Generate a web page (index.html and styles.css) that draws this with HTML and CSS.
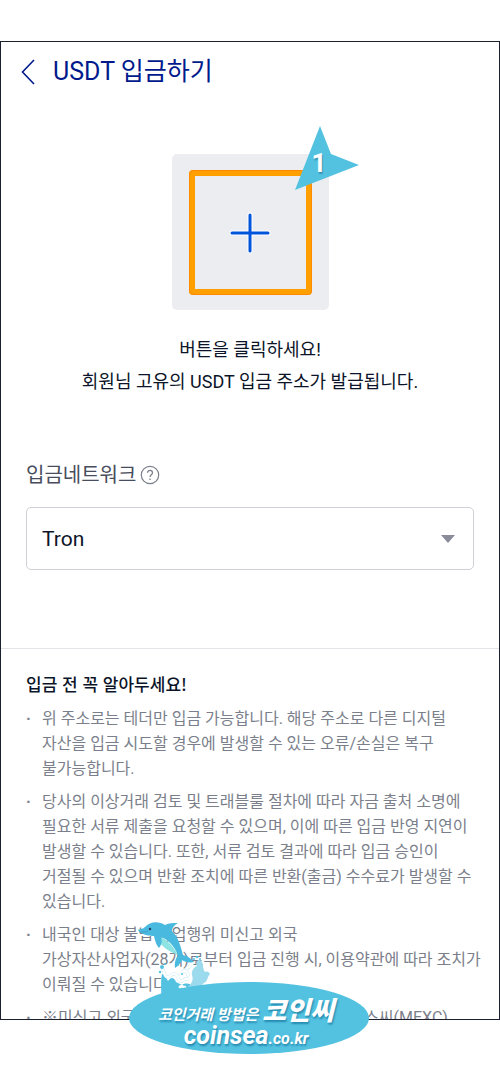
FILE: index.html
```html
<!DOCTYPE html>
<html lang="ko">
<head>
<meta charset="utf-8">
<meta name="viewport" content="width=device-width, initial-scale=1">
<title>USDT 입금하기</title>
<link rel="stylesheet" href="styles.css">
</head>
<body class="page">
<main class="screen">
  <header class="header">
    <button class="back" type="button" aria-label="뒤로">
      <svg width="14" height="26" viewBox="0 0 14 26" fill="none" stroke="currentColor" stroke-width="1.6"><path d="M13 1 1.5 13 13 25"/></svg>
    </button>
    <h1 class="title">USDT 입금하기</h1>
  </header>

  <section class="issue">
    <div class="issue-box">
      <button class="issue-button" type="button" aria-label="입금 주소 발급">
        <svg width="42" height="42" viewBox="0 0 42 42" fill="none" stroke-linecap="round"><path d="M21 3v36M3 21h36" stroke="#fff" stroke-width="5"/><path d="M21 3v36M3 21h36" stroke="#0054dc" stroke-width="3"/></svg>
      </button>
      <div class="pointer">
        <svg class="pointer-shape" viewBox="0 0 64 65"><path d="M25 0 36 28 64 39 0 64Z" fill="#53c2e1"/></svg>
        <span class="pointer-number">1</span>
      </div>
    </div>
    <p class="issue-text">버튼을 클릭하세요!<br>회원님 고유의 USDT 입금 주소가 발급됩니다.</p>
  </section>

  <section class="network">
    <div class="network-label">
      <label for="network">입금네트워크</label>
      <button class="help" type="button" aria-label="도움말">
        <svg width="20" height="20" viewBox="0 0 20 20" fill="none" stroke="currentColor"><circle cx="10" cy="10" r="8.7" stroke-width="1.2"/><path d="M7.5 7.8c0-3.2 5-3.1 5-.1 0 2-2.5 2.2-2.5 4.4M10 13.5v1.5" stroke-width="1.3"/></svg>
      </button>
    </div>
    <div class="select-wrap">
      <select id="network" class="select"><option>Tron</option></select>
      <svg class="arrow" width="14" height="8" viewBox="0 0 14 8"><path d="M0 0h14L7 8Z" fill="#8a8d99"/></svg>
    </div>
  </section>

  <section class="notice">
    <h2 class="notice-title">입금 전 꼭 알아두세요!</h2>
    <ul class="notice-list">
      <li>위 주소로는 테더만 입금 가능합니다. 해당 주소로 다른 디지털<br>자산을 입금 시도할 경우에 발생할 수 있는 오류/손실은 복구<br>불가능합니다.</li>
      <li>당사의 이상거래 검토 및 트래블룰 절차에 따라 자금 출처 소명에<br>필요한 서류 제출을 요청할 수 있으며, 이에 따른 입금 반영 지연이<br>발생할 수 있습니다. 또한, 서류 검토 결과에 따라 입금 승인이<br>거절될 수 있으며 반환 조치에 따른 반환(출금) 수수료가 발생할 수<br>있습니다.</li>
      <li>내국인 대상 불법 영업행위 미신고 외국<br>가상자산사업자(28개)로부터 입금 진행 시, 이용약관에 따라 조치가<br>이뤄질 수 있습니다.</li>
      <li>※미신고 외국 가상자산사업자(28개) : 쿠코인, 멕스씨(MEXC)</li>
    </ul>
  </section>
</main>

<aside class="brand">
  <svg class="dolphin" viewBox="0 0 78 74">
    <path d="M24 74c1-6-1-12 1-22 3 1 4 4 6 7 3-4 6-4 8 1l6 3c4-3 9-1 12 2l2 9Z" fill="#53c2e1"/>
    <path d="M48 67c6-4 9-8 7-14-1-4 2-8 5-9-2-3 1-7 3-6 4 2 2 8 5 12 2-1 4 0 5 2-3 3-2 7-6 9-4 3-3 6-6 8Z" fill="#9cdaed"/>
    <g fill="none" stroke-linecap="round" stroke-linejoin="round">
      <path d="M26 48c2 4 1 6 4 7s4-4 8-3 2 6 5 7 4-3 7-2M46 49c3-1 5 2 5 4M50 46c3 0 3-4 6-5M43 65c2-3 3 2 5 0" stroke="#b5e3f1" stroke-width="3"/>
      <path d="M26 48c2 4 1 6 4 7s4-4 8-3 2 6 5 7 4-3 7-2M46 49c3-1 5 2 5 4M50 46c3 0 3-4 6-5M43 65c2-3 3 2 5 0" stroke="#fff" stroke-width="2.4"/>
    </g>
    <g fill="#53c2e1"><circle cx="25" cy="45" r="2"/><circle cx="23" cy="50" r="1.2"/><circle cx="28" cy="42" r="1"/><circle cx="60" cy="35" r="1.3"/><circle cx="63" cy="37" r="1"/><circle cx="57" cy="37" r="1"/><circle cx="45" cy="52" r="1"/><circle cx="36" cy="58" r="1"/></g>
    <path d="M19 13c8 2 16 9 22 20C33 30 23 24 22 18Z" fill="#8de4e2"/>
    <path d="M0 8c3-1 6-1 8-3 5-6 14-6 20-2 4-2 8-2 13-2-4 2-6 5-6 8 7 7 9 17 11 24 5 1 7 3 11 7-5 1-9 0-12-2-2 4-4 6-7 8-1-5 1-10 3-13-4-9-9-15-17-18 1 5 1 7-2 11-3-3-4-8-5-12-4 0-9-1-11-2-2-1-4-2-5-4Z" fill="#49b9df"/>
    <circle cx="13" cy="7" r="1.2" fill="#203b5c"/>
    <path d="M2 10c4 0 7 0 9-1" fill="none" stroke="#398fb7" stroke-width=".6"/>
  </svg>
  <div class="brand-oval">
    <p class="brand-line"><span class="brand-small">코인거래 방법은</span><strong class="brand-name">코인씨</strong></p>
    <p class="brand-url">coinsea<span class="brand-domain">.co.kr</span></p>
  </div>
</aside>
</body>
</html>
```
FILE: styles.css
```css
* { box-sizing: border-box; }

.page {
  position: relative;
  display: flex;
  flex-direction: column;
  height: 100vh;
  margin: 0;
  padding: 41px 0 63px;
  background: #fff;
  color: #0b1428;
  font-family: Roboto, "Noto Sans CJK KR", sans-serif;
}

.screen {
  flex: 1;
  min-height: 0;
  overflow: hidden;
  border: 1px solid #1b1f2e;
}

button {
  padding: 0;
  border: 0;
  background: none;
  color: inherit;
}

.back, .help { display: flex; }

.header {
  display: flex;
  align-items: center;
  gap: 18px;
  height: 60px;
  padding: 0 20px;
  color: #001a8c;
}

.title {
  margin: 0;
  font-size: 25px;
  font-weight: 400;
  line-height: 36px;
}

.issue {
  display: flex;
  flex-direction: column;
  align-items: center;
  gap: 24px;
  padding-top: 52px;
}

.issue-box {
  position: relative;
  padding: 16px 17px 15px;
  border-radius: 5px;
  background: #ecedf1;
}

.issue-button {
  display: flex;
  align-items: center;
  justify-content: center;
  width: 123px;
  height: 125px;
  border: 6px solid #ffa000;
  border-radius: 4px;
  outline: 1px solid #ff8a00;
  outline-offset: -1px;
}

.pointer {
  position: absolute;
  top: -28px;
  right: -30px;
  width: 64px;
  height: 65px;
}

.pointer-shape { display: block; }

.pointer-number {
  position: absolute;
  top: 22px;
  left: 17px;
  color: #fff;
  font-size: 26px;
  font-weight: 700;
  line-height: 30px;
  text-shadow: 1px 2px 1px #3797b5;
}

.issue-text {
  margin: 0;
  font-size: 18px;
  line-height: 32px;
  text-align: center;
}

.network {
  display: flex;
  flex-direction: column;
  gap: 17px;
  padding: 62px 25px 78px;
}

.network-label {
  display: flex;
  align-items: center;
  gap: 4px;
  color: #474d5c;
  font-size: 20px;
  line-height: 30px;
}

.help { color: #7b808c; }

.select-wrap { position: relative; }

.select {
  appearance: none;
  display: block;
  width: 100%;
  height: 63px;
  padding: 0 15px;
  border: 1px solid #cfd1d6;
  border-radius: 5px;
  background: #fff;
  color: #0b1428;
  font: 400 21px/30px Roboto, "Noto Sans CJK KR", sans-serif;
}

.arrow {
  position: absolute;
  top: 28px;
  right: 19px;
  pointer-events: none;
}

.notice {
  padding: 22px 25px 0;
  border-top: 1px solid #e3e4e8;
}

.notice-title {
  margin: 0 0 9px;
  font-family: "Noto Sans CJK KR", sans-serif;
  font-size: 17px;
  font-weight: 500;
  line-height: 26px;
}

.notice-list {
  display: flex;
  flex-direction: column;
  gap: 8px;
  margin: 0;
  padding: 0;
  color: #7b7f8b;
  font-size: 16px;
  line-height: 25px;
  list-style: none;
  white-space: nowrap;
}

.notice-list li {
  display: flow-root;
  padding-left: 16px;
}

.notice-list li::before {
  content: "·";
  float: left;
  width: 16px;
  margin-left: -16px;
  font-weight: 700;
}

.brand {
  position: absolute;
  bottom: 29px;
  left: calc(50% - 121px);
  width: 240px;
  color: #fff;
}

.dolphin {
  position: absolute;
  bottom: 58px;
  left: 8px;
  width: 78px;
  height: 74px;
}

.brand-oval {
  position: relative;
  display: flex;
  flex-direction: column;
  align-items: center;
  height: 72px;
  padding: 14px 6px 0 0;
  border-radius: 50%;
  background: #53c2e1;
  font-style: italic;
  font-weight: 700;
  text-shadow: 1px 2px 2px #258bb0;
  white-space: nowrap;
}

.brand-line {
  display: flex;
  align-items: baseline;
  gap: 4px;
  height: 27px;
  margin: 0;
  line-height: 30px;
}

.brand-small { font-size: 15px; }

.brand-name { font-size: 26px; }

.brand-url {
  margin: 0;
  font-size: 25px;
  line-height: 26px;
}

.brand-domain { font-size: 16px; }
```
